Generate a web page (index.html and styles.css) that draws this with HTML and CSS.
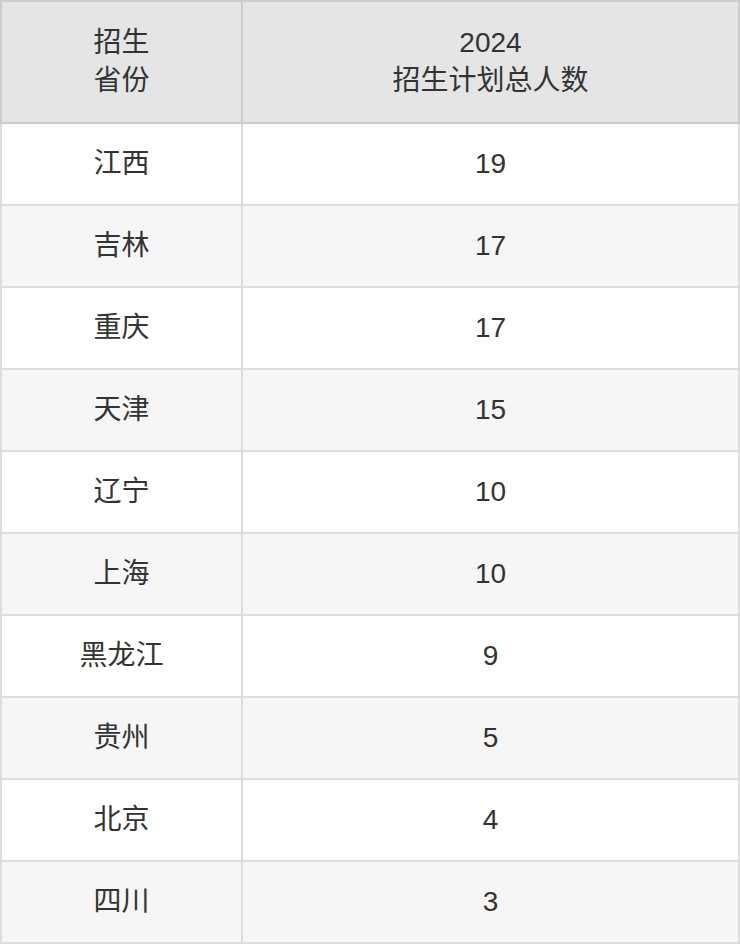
FILE: index.html
```html
<!DOCTYPE html>
<html lang="zh">
<head>
<meta charset="utf-8">
<link rel="stylesheet" href="styles.css">
</head>
<body>
<table class="plan">
  <colgroup><col class="c-prov"><col class="c-num"></colgroup>
  <thead>
    <tr><th>招生<br>省份</th><th>2024<br>招生计划总人数</th></tr>
  </thead>
  <tbody>
    <tr><td>江西</td><td>19</td></tr>
    <tr><td>吉林</td><td>17</td></tr>
    <tr><td>重庆</td><td>17</td></tr>
    <tr><td>天津</td><td>15</td></tr>
    <tr><td>辽宁</td><td>10</td></tr>
    <tr><td>上海</td><td>10</td></tr>
    <tr><td>黑龙江</td><td>9</td></tr>
    <tr><td>贵州</td><td>5</td></tr>
    <tr><td>北京</td><td>4</td></tr>
    <tr><td>四川</td><td>3</td></tr>
  </tbody>
</table>
</body>
</html>
```
FILE: styles.css
```css
html, body {
  margin: 0;
  padding: 0;
  background: #ffffff;
}
.plan {
  width: 740px;
  border-collapse: collapse;
  table-layout: fixed;
  font-family: "Liberation Sans", "Noto Sans CJK SC", sans-serif;
  font-size: 28px;
  color: #333333;
}
.c-prov { width: 241px; }
.plan th {
  background: #e5e5e5;
  border: 2px solid #cccccc;
  font-weight: normal;
  height: 120px;
  padding: 0;
  line-height: 38px;
  text-align: center;
  vertical-align: middle;
}
.plan td {
  border: 2px solid #dddddd;
  height: 80px;
  padding: 0;
  line-height: 36px;
  text-align: center;
  vertical-align: middle;
}
.plan tbody tr:nth-child(even) td {
  background: #f6f6f6;
}
```
